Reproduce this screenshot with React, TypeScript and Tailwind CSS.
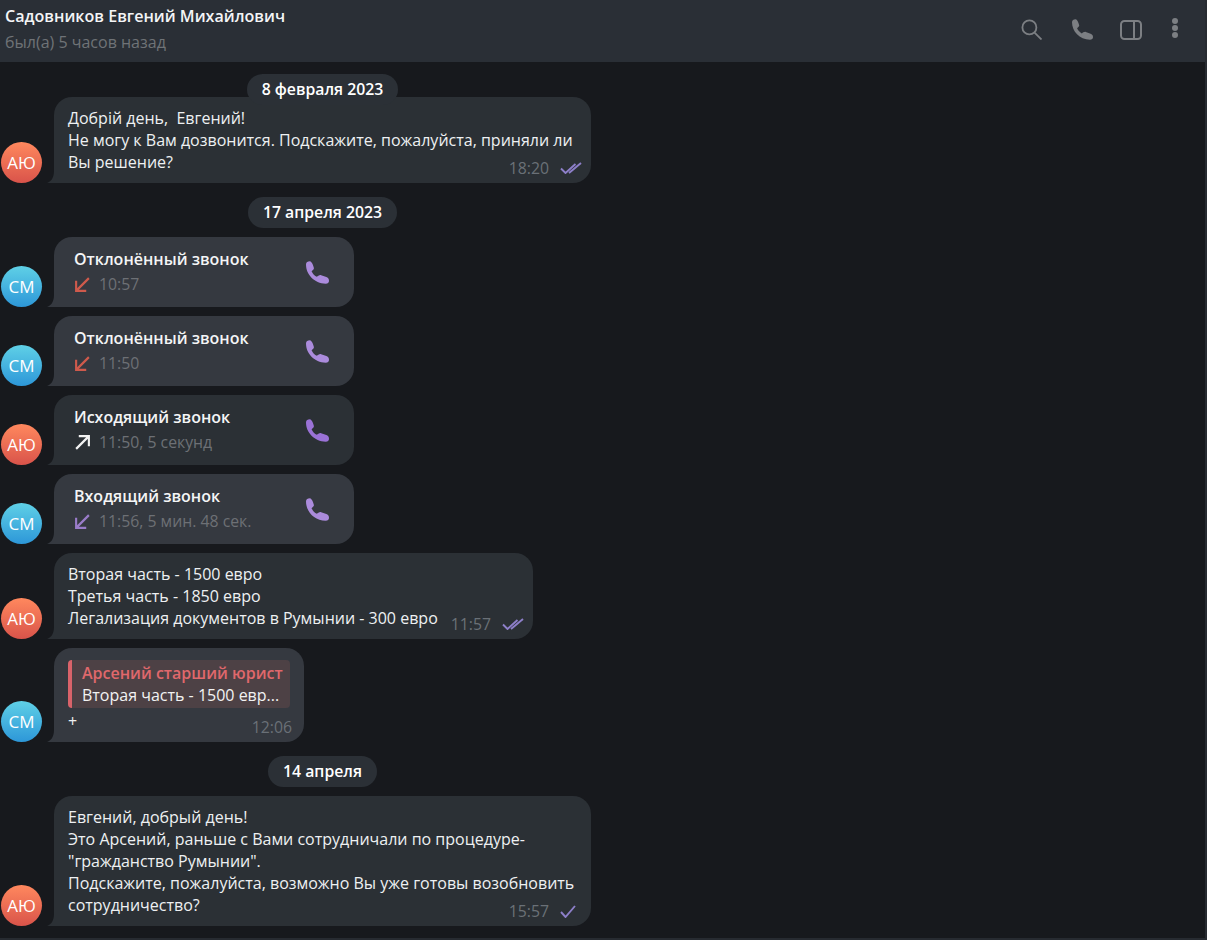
import type { ReactNode } from 'react'

const font = 'font-["Open_Sans","Noto_Sans",sans-serif]'

function PhoneIcon({ className }: { className: string }) {
  return (
    <svg viewBox="0 0 70 68" fill="currentColor" className={className}>
      <path d="M0 10C0 3 5 0 12 0c5 0 10 12 12 20 1 4-4 7-7 10 3 8 10 14 16 17 3-2 7-6 13-5l16 6c7 2 8 8 8 12 0 5-4 8-10 8C25 68 0 40 0 10z" />
    </svg>
  )
}

function Checks({ double }: { double?: boolean }) {
  return (
    <svg
      viewBox={double ? '0 0 22 12' : '0 0 16 13'}
      fill="none"
      stroke="#8d7fc9"
      strokeWidth="1.9"
      className={double ? 'ml-[11px] h-[12px] w-[22px]' : 'ml-[11px] h-[13px] w-[16px]'}
    >
      {double ? (
        <>
          <path d="M1 6.500l4.500 4.500L15.500 2" />
          <path d="M9 11 21 1" />
        </>
      ) : (
        <path d="M1 7l4.500 5L15 1" />
      )}
    </svg>
  )
}

function Avatar({ who }: { who: 'ay' | 'sm' }) {
  return (
    <div
      className={`ml-px flex h-[41px] w-[41px] shrink-0 items-center justify-center rounded-full text-[17px] text-white ${
        who === 'ay' ? 'bg-gradient-to-b from-[#ff885e] to-[#d9534a]' : 'bg-gradient-to-b from-[#5fd0e6] to-[#2d97d8]'
      }`}
    >
      {who === 'ay' ? 'АЮ' : 'СМ'}
    </div>
  )
}

function Bubble({
  who,
  className,
  children,
}: {
  who: 'ay' | 'sm'
  className: string
  children: ReactNode
}) {
  const bg = who === 'ay' ? 'bg-[#2b3035]' : 'bg-[#353940]'
  const fill = who === 'ay' ? '#2b3035' : '#353940'
  return (
    <div className="flex items-end">
      <Avatar who={who} />
      <div className={`relative ml-[12px] rounded-[18px] rounded-bl-none ${bg} ${className}`}>
        <svg viewBox="0 0 7 12" className="absolute bottom-0 -left-[7px] h-[12px] w-[7px]">
          <path d="M7 0v12H0c3-1 7-4 7-12z" fill={fill} />
        </svg>
        {children}
      </div>
    </div>
  )
}

function DateChip({ text, className }: { text: string; className: string }) {
  return (
    <div className={`relative z-10 flex w-[591px] justify-center pl-[54px] ${className}`}>
      <span className="h-[31px] rounded-full bg-[#2b3036] px-[15px] text-[15.8px] leading-[30px] font-semibold text-white">
        {text}
      </span>
    </div>
  )
}

function Time({ t, double, single, className }: { t: string; double?: boolean; single?: boolean; className: string }) {
  return (
    <div className={`absolute flex items-center text-[15.8px] leading-[22px] text-[#6a7077] ${className}`}>
      {t}
      {(double || single) && <Checks double={double} />}
    </div>
  )
}

function Call({
  title,
  sub,
  dir,
  who,
}: {
  title: string
  sub: string
  dir: 'missed' | 'out' | 'in'
  who: 'ay' | 'sm'
}) {
  const color = dir === 'missed' ? '#cf5a4c' : dir === 'out' ? '#f2f2f2' : '#9a7cc9'
  return (
    <Bubble who={who} className="flex h-[70px] w-[300px] items-start justify-between pt-[11px] pr-[25px] pl-[20px]">
      <div>
        <div className="text-[16px] leading-[22px] font-semibold text-[#f4f5f6]">{title}</div>
        <div className="mt-[3px] flex items-center text-[15.8px] leading-[22px] text-[#6d7075]">
          <svg viewBox="0 0 16 16" fill="none" stroke={color} strokeWidth="2" className="mr-[8px] h-[17px] w-[17px]">
            {dir === 'out' ? <path d="M2 14 14 2M4.500 2H14v9.500" /> : <path d="M14 2 2 14M11.500 14H2V4.500" />}
          </svg>
          {sub}
        </div>
      </div>
      <PhoneIcon className={`mt-[13px] h-[23px] w-[23px] ${who === 'ay' ? 'text-[#9a72d6]' : 'text-[#ab8bdc]'}`} />
    </Bubble>
  )
}

export default function App() {
  return (
    <div className={`h-[940px] w-[1207px] overflow-hidden bg-[#272b31] ${font}`}>
      <div className="flex h-[938px] w-[1205px] flex-col bg-[#17191d]">
        <header className="flex h-[62px] shrink-0 items-start justify-between bg-[#2a2f36] pr-[27px] pl-[5px]">
          <div>
            <div className="mt-[5px] text-[16.1px] leading-[22px] font-semibold text-[#f4f5f6]">
              Садовников Евгений Михайлович
            </div>
            <div className="mt-[4px] text-[16px] leading-[22px] text-[#6f7377]">был(а) 5 часов назад</div>
          </div>
          <div className="mt-[19px] flex items-center text-[#7c7f83]">
            <svg viewBox="0 0 21 21" fill="none" stroke="currentColor" strokeWidth="1.8" className="h-[21px] w-[21px]">
              <circle cx="8.400" cy="8.400" r="7" />
              <path d="M13.300 13.300 20.500 20.500" />
            </svg>
            <PhoneIcon className="ml-[30px] h-[21px] w-[21px]" />
            <svg viewBox="0 0 22 20" fill="none" stroke="currentColor" strokeWidth="2" className="ml-[27px] h-[20px] w-[22px]">
              <rect x="1" y="1" width="20" height="18" rx="3.500" />
              <path d="M14 1v18" />
            </svg>
            <div className="-mt-[3px] ml-[30px] flex flex-col gap-px">
              <span className="h-[6px] w-[6px] rounded-full bg-current" />
              <span className="h-[6px] w-[6px] rounded-full bg-current" />
              <span className="h-[6px] w-[6px] rounded-full bg-current" />
            </div>
          </div>
        </header>

        <main className="flex flex-col text-[16px] leading-[22px] text-[#eef0f2]">
          <DateChip text="8 февраля 2023" className="mt-[12px] -mb-[8px]" />
          <Bubble who="ay" className="h-[86px] w-[537px] px-[14px] pt-[10px]">
            Добрій день,&nbsp; Евгений!
            <br />
            Не могу к Вам дозвонится. Подскажите, пожалуйста, приняли ли
            <br />
            Вы решение?
            <Time t="18:20" double className="right-[9px] bottom-[4px]" />
          </Bubble>

          <DateChip text="17 апреля 2023" className="mt-[14px] mb-[9px]" />
          <div className="flex flex-col gap-[9px]">
            <Call who="sm" title="Отклонённый звонок" sub="10:57" dir="missed" />
            <Call who="sm" title="Отклонённый звонок" sub="11:50" dir="missed" />
            <Call who="ay" title="Исходящий звонок" sub="11:50, 5 секунд" dir="out" />
            <Call who="sm" title="Входящий звонок" sub="11:56, 5 мин. 48 сек." dir="in" />
            <Bubble who="ay" className="h-[86px] w-[479px] px-[14px] pt-[10px]">
              Вторая часть - 1500 евро
              <br />
              Третья часть - 1850 евро
              <br />
              Легализация документов в Румынии - 300 евро
              <Time t="11:57" double className="right-[9px] bottom-[4px]" />
            </Bubble>
            <Bubble who="sm" className="h-[94px] w-[250px] px-[14px] pt-[12px]">
              <div className="h-[48px] w-[222px] overflow-hidden rounded-[4px] border-l-[4px] border-[#d9636a] bg-[#4d4145] pl-[10px] whitespace-nowrap">
                <div className="pt-[2px] font-semibold text-[#e0686c]">Арсений старший юрист</div>
                <div className="text-[#f2f2f2]">Вторая часть - 1500 евр...</div>
              </div>
              <div className="mt-[2px]">+</div>
              <Time t="12:06" className="right-[12px] bottom-[4px]" />
            </Bubble>
          </div>

          <DateChip text="14 апреля" className="mt-[14px] mb-[9px]" />
          <Bubble who="ay" className="h-[130px] w-[537px] px-[14px] pt-[10px]">
            Евгений, добрый день!
            <br />
            Это Арсений, раньше с Вами сотрудничали по процедуре-
            <br />
            "гражданство Румынии".
            <br />
            Подскажите, пожалуйста, возможно Вы уже готовы возобновить
            <br />
            сотрудничество?
            <Time t="15:57" single className="right-[15px] bottom-[4px]" />
          </Bubble>
        </main>
      </div>
    </div>
  )
}
